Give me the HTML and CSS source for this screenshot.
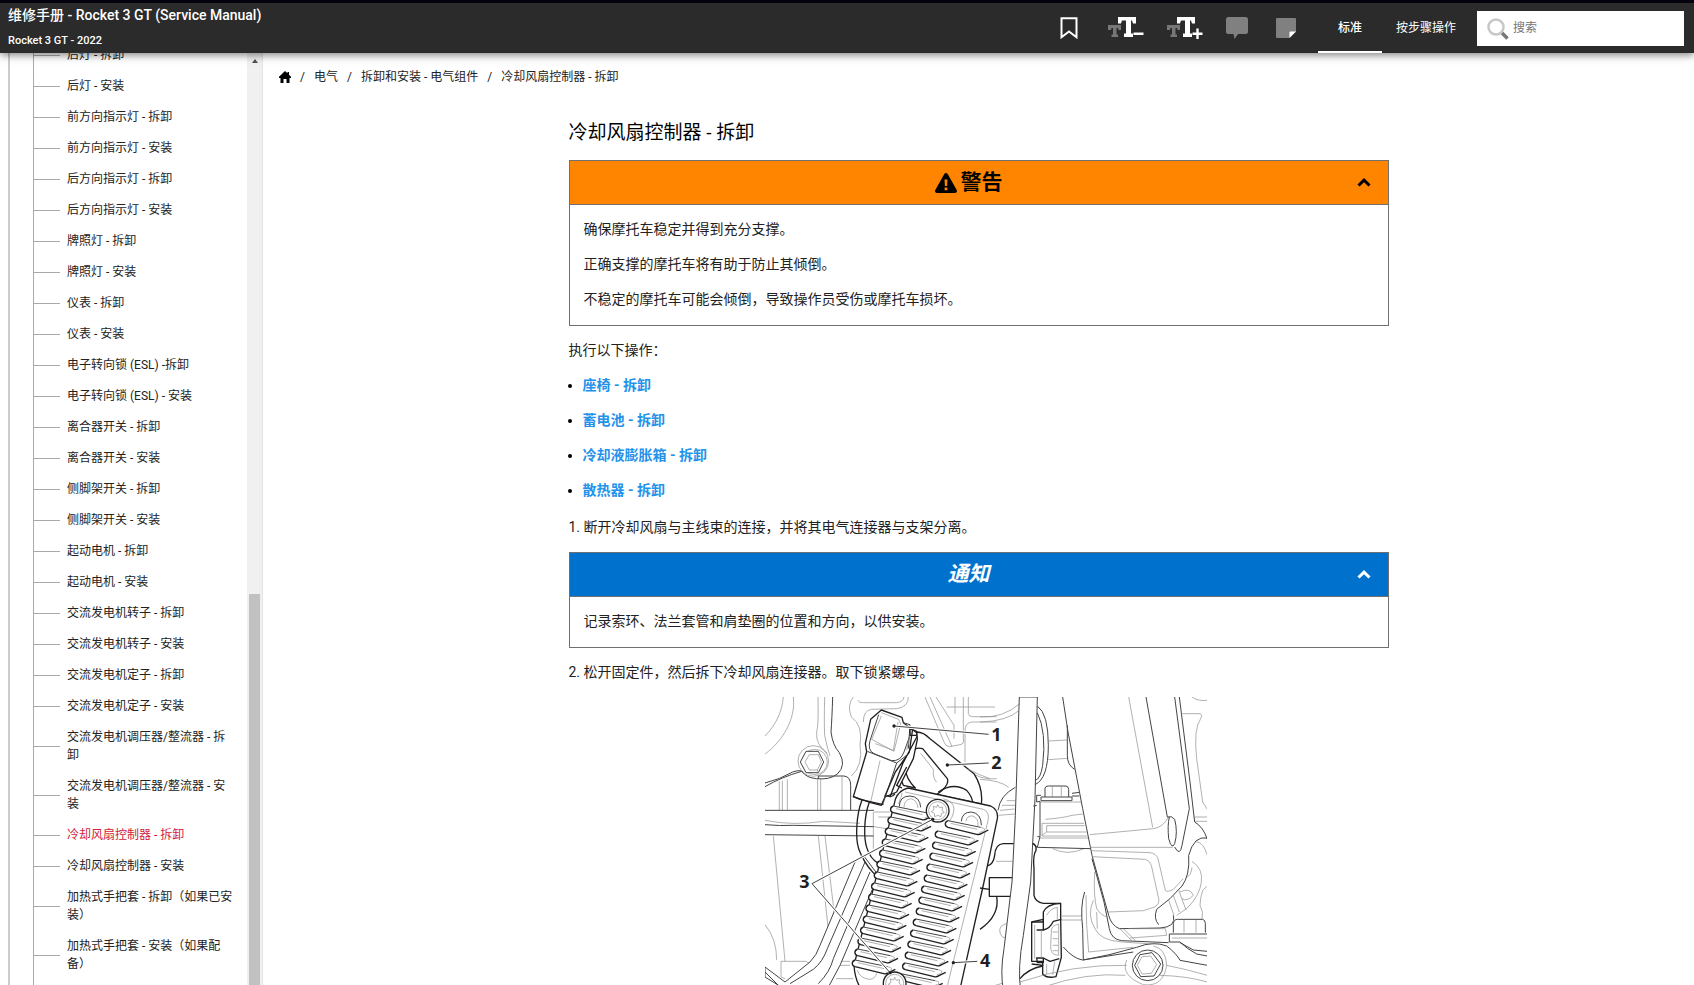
FILE: index.html
```html
<!DOCTYPE html>
<html lang="zh-CN">
  <head>
    <meta charset="utf-8" />
    <meta name="viewport" content="width=device-width, initial-scale=1" />
    <title>维修手册 - Rocket 3 GT (Service Manual)</title>
    <link rel="stylesheet" href="styles.css">
  </head>

  <body>
    <header class="header">
      <div class="header__titles">
        <h1 class="header__title">维修手册 - Rocket 3 GT (Service Manual)</h1>
        <p class="header__subtitle">Rocket 3 GT - 2022</p>
      </div>
      <div class="toolbar">
        <button class="toolbar__button toolbar__button_bookmark" type="button" aria-label="书签">
          <svg width="18" height="22" viewBox="0 0 18 22"><path d="M1.500 1.200h15v19L9 14.500l-7.500 5.700z" fill="none" stroke="#fff" stroke-width="2"/></svg>
        </button>
        <button class="toolbar__button toolbar__button_font" type="button" aria-label="缩小字体">
          <svg width="36" height="22" viewBox="0 0 36 22">
            <path d="M0 8h13v5h-2.500l-.5-2H8.500v6.500H10V20H3.500v-2.500H5V11H3.500L3 13H0z" fill="#777"/>
            <path d="M10 0h18v6.500h-3L24 3.500h-1v13h2V20h-9v-3.500h2v-13h-4l-1 3h-3z" fill="#fff"/>
            <path d="M25.500 15.500h10V18h-10z" fill="#fff"/>
          </svg>
        </button>
        <button class="toolbar__button toolbar__button_font" type="button" aria-label="放大字体">
          <svg width="36" height="22" viewBox="0 0 36 22">
            <path d="M0 8h13v5h-2.500l-.5-2H8.500v6.500H10V20H3.500v-2.500H5V11H3.500L3 13H0z" fill="#777"/>
            <path d="M10 0h18v6.500h-3L24 3.500h-1v13h2V20h-9v-3.500h2v-13h-4l-1 3h-3z" fill="#fff"/>
            <path d="M25.500 15.500h3.800v-4h2.400v4h3.800V18h-3.800v4h-2.400v-4h-3.800z" fill="#fff"/>
          </svg>
        </button>
        <button class="toolbar__button toolbar__button_comment" type="button" aria-label="评论">
          <svg width="22" height="22" viewBox="0 0 22 22"><path d="M2.500 0h17A2.500 2.500 0 0 1 22 2.500v12a2.500 2.500 0 0 1-2.500 2.500H12l-3.500 5L7.500 17h-5A2.500 2.500 0 0 1 0 14.500v-12A2.500 2.500 0 0 1 2.500 0z" fill="#808080"/></svg>
        </button>
        <button class="toolbar__button toolbar__button_note" type="button" aria-label="备注">
          <svg width="20" height="20" viewBox="0 0 20 20"><path d="M1 0h18a1 1 0 0 1 1 1v12.500L13.500 20H1a1 1 0 0 1-1-1V1a1 1 0 0 1 1-1z" fill="#808080"/><path d="M13.500 20v-5.500a1 1 0 0 1 1-1H20z" fill="#fff"/></svg>
        </button>
      </div>
      <nav class="modes">
        <a class="modes__link modes__link_active" href="#">标准</a>
        <a class="modes__link" href="#">按步骤操作</a>
      </nav>
      <label class="search">
        <svg class="search__icon" width="22" height="22" viewBox="0 0 22 22"><path d="M14.500 14.500l6 6" stroke="#777" stroke-width="3.500"/><circle cx="9" cy="9" r="7.500" fill="none" stroke="#c8c8c8" stroke-width="2.600"/></svg>
        <input class="search__input" type="text" placeholder="搜索" aria-label="搜索" />
      </label>
    </header>

    <div class="page">
      <aside class="sidebar">
        <nav class="tree">
          <ul class="tree__list">
            <li class="tree__item"><a href="#">后灯 - 拆卸</a></li>
            <li class="tree__item"><a href="#">后灯 - 安装</a></li>
            <li class="tree__item"><a href="#">前方向指示灯 - 拆卸</a></li>
            <li class="tree__item"><a href="#">前方向指示灯 - 安装</a></li>
            <li class="tree__item"><a href="#">后方向指示灯 - 拆卸</a></li>
            <li class="tree__item"><a href="#">后方向指示灯 - 安装</a></li>
            <li class="tree__item"><a href="#">牌照灯 - 拆卸</a></li>
            <li class="tree__item"><a href="#">牌照灯 - 安装</a></li>
            <li class="tree__item"><a href="#">仪表 - 拆卸</a></li>
            <li class="tree__item"><a href="#">仪表 - 安装</a></li>
            <li class="tree__item"><a href="#">电子转向锁 (ESL) -拆卸</a></li>
            <li class="tree__item"><a href="#">电子转向锁 (ESL) - 安装</a></li>
            <li class="tree__item"><a href="#">离合器开关 - 拆卸</a></li>
            <li class="tree__item"><a href="#">离合器开关 - 安装</a></li>
            <li class="tree__item"><a href="#">侧脚架开关 - 拆卸</a></li>
            <li class="tree__item"><a href="#">侧脚架开关 - 安装</a></li>
            <li class="tree__item"><a href="#">起动电机 - 拆卸</a></li>
            <li class="tree__item"><a href="#">起动电机 - 安装</a></li>
            <li class="tree__item"><a href="#">交流发电机转子 - 拆卸</a></li>
            <li class="tree__item"><a href="#">交流发电机转子 - 安装</a></li>
            <li class="tree__item"><a href="#">交流发电机定子 - 拆卸</a></li>
            <li class="tree__item"><a href="#">交流发电机定子 - 安装</a></li>
            <li class="tree__item"><a href="#">交流发电机调压器/整流器 - 拆卸</a></li>
            <li class="tree__item"><a href="#">交流发电机调压器/整流器 - 安装</a></li>
            <li class="tree__item tree__item_active"><a href="#">冷却风扇控制器 - 拆卸</a></li>
            <li class="tree__item"><a href="#">冷却风扇控制器 - 安装</a></li>
            <li class="tree__item"><a href="#">加热式手把套 - 拆卸（如果已安装）</a></li>
            <li class="tree__item"><a href="#">加热式手把套 - 安装（如果配备）</a></li>
          </ul>
        </nav>
        <div class="scrollbar">
          <span class="scrollbar__arrow"></span>
          <span class="scrollbar__thumb"></span>
        </div>
      </aside>

      <main class="content">
        <nav class="breadcrumbs">
          <a class="breadcrumbs__link" href="#" aria-label="主页">
            <svg class="breadcrumbs__home" width="12" height="12" viewBox="0 0 12 12"><path d="M6 0l2.500 2.300V1H10v2.700l2 2V7h-1.500v5h-3V8h-3v4h-3V7H0V5.700z" fill="#000"/></svg>
          </a>
          <a class="breadcrumbs__link" href="#">电气</a>
          <a class="breadcrumbs__link" href="#">拆卸和安装 - 电气组件</a>
          <a class="breadcrumbs__link" href="#">冷却风扇控制器 - 拆卸</a>
        </nav>

        <article class="article">
          <h2 class="article__title">冷却风扇控制器 - 拆卸</h2>

          <section class="notice">
            <button class="notice__header notice__header_warning" type="button">
              <svg class="notice__icon" width="22" height="20" viewBox="0 0 22 20"><path d="M11 0c.8 0 1.300.4 1.700 1l9 16c.7 1.400 0 3-1.600 3H1.900C.3 20-.4 18.400.3 17l9-16C9.700.4 10.200 0 11 0z" fill="#000"/><path d="M9.500 6.500h3l-.4 6.500h-2.200zM9.600 14.500h2.800v2.800H9.600z" fill="#ff8400"/></svg>
              <span>警告</span>
              <svg class="notice__arrow" width="14" height="9" viewBox="0 0 14 9"><path d="M1.500 7.500L7 2.200l5.500 5.300" fill="none" stroke="currentColor" stroke-width="3"/></svg>
            </button>
            <div class="notice__body">
              <p>确保摩托车稳定并得到充分支撑。</p>
              <p>正确支撑的摩托车将有助于防止其倾倒。</p>
              <p>不稳定的摩托车可能会倾倒，导致操作员受伤或摩托车损坏。</p>
            </div>
          </section>

          <p>执行以下操作：</p>
          <ul class="links">
            <li><a href="#">座椅 - 拆卸</a></li>
            <li><a href="#">蓄电池 - 拆卸</a></li>
            <li><a href="#">冷却液膨胀箱 - 拆卸</a></li>
            <li><a href="#">散热器 - 拆卸</a></li>
          </ul>

          <p>1. 断开冷却风扇与主线束的连接，并将其电气连接器与支架分离。</p>

          <section class="notice">
            <button class="notice__header notice__header_info" type="button">
              <span>通知</span>
              <svg class="notice__arrow" width="14" height="9" viewBox="0 0 14 9"><path d="M1.500 7.500L7 2.200l5.500 5.300" fill="none" stroke="currentColor" stroke-width="3"/></svg>
            </button>
            <div class="notice__body">
              <p>记录索环、法兰套管和肩垫圈的位置和方向，以供安装。</p>
            </div>
          </section>

          <p>2. 松开固定件，然后拆下冷却风扇连接器。取下锁紧螺母。</p>

          <figure class="figure">
            <svg class="figure__drawing" viewBox="0 0 1326 870" role="img" aria-label="冷却风扇控制器">
              <defs>
                <g id="fin">
                  <path class="bold fill" d="M6 0C-5 4-5 17 6 20L92 41Q100 43 107 38L127 28"/>
                  <path class="line" d="M6 0L104 20"/>
                  <path class="thin" d="M104 20Q124 25 112 31L100 36M14 8L94 26"/>
                </g>
                <g id="fins">
                  <use href="#fin" x="0" y="0"/>
                  <use href="#fin" x="-8" y="33"/>
                  <use href="#fin" x="-16" y="66"/>
                  <use href="#fin" x="-25" y="99"/>
                  <use href="#fin" x="-33" y="132"/>
                </g>
              </defs>

              <!-- engine cases, left half -->
              <g transform="translate(-45 -45)">
                <path class="thin" d="M100 45C96 90 78 128 45 162M130 45C138 110 98 178 45 216"/>
                <path class="thin" d="M204 45Q206 130 200 150Q196 188 232 214M224 45Q222 120 224 160Q232 200 240 222"/>
                <path class="line" d="M248 45Q246 110 243 150Q248 190 268 212Q290 250 262 276Q240 294 200 290Q170 288 155 268Q95 285 45 314"/>
                <path class="line" d="M45 303Q90 292 128 270Q150 262 160 270"/>
                <path class="thin" d="M310 45Q290 70 304 105Q340 130 330 190Q340 250 304 282"/>
                <circle class="thin" cx="190" cy="237" r="46"/>
                <circle class="thin" cx="194" cy="240" r="38"/>
                <path class="line fill" d="M151 240L168 208L205 208L221 240L205 272L168 272z"/>
                <path class="thin" d="M165 240L178 218L205 218L214 240L202 264L178 264zM205 208L210 218M205 272L202 264"/>
                <path class="line" d="M205 290V282H282Q302 284 302 310V384"/>
                <path class="thin" d="M88 298V384M97 296V384M112 292V384M203 290V384M212 290V384M276 283V384"/>
                <path class="line" d="M45 385H372M45 428Q90 432 130 430L372 434M45 458L372 462"/>
                <path class="thin" d="M45 415Q130 432 220 418Q300 422 330 424M70 462L105 838M205 462L245 838M225 462L262 770"/>
                <path class="thin" d="M93 838H170M93 838V885L105 890M45 728Q80 770 80 834M170 840L200 852M258 890H310M230 838H300M262 850H300"/>
                <path class="line fill" d="M315 540L210 790Q200 820 180 840L105 900L45 855V885L110 925H230L270 850L385 580L340 520z"/>
                <path class="line" d="M345 540L232 800Q218 840 190 862L120 905M360 570L250 830Q240 870 205 905M45 870L90 915"/>
                <path class="thin" d="M325 55Q325 62 340 62H440Q460 60 462 45M340 120Q340 85 365 82L440 80Q475 75 475 45"/>
                <path class="thin" d="M525 45L582 180Q585 192 598 194L630 188Q644 186 640 170L640 45M540 45L606 194M558 45L612 130L612 170M615 45V95M655 45V95Q657 104 668 104H740M740 120H665Q645 124 645 145V240"/>
                <path class="thin" d="M590 75L735 75M650 262Q690 296 740 290M370 390V500M372 390H420M385 405H420M372 434L410 440"/>
              </g>

              <!-- connector, bracket and cable -->
              <g transform="translate(-45 -45)">
                <path class="bold fill" d="M500 150Q520 150 540 170L672 275Q700 320 694 366L560 338Q600 310 592 290L518 200Q500 195 490 205L468 250Q462 285 496 318L460 310L440 260z"/>
                <path class="thin" d="M512 214L550 262Q548 290 560 300M655 262Q690 280 720 290"/>
                <path class="bold" d="M565 330Q610 300 650 325Q668 345 668 365"/>
                <path class="bold" d="M336 354C318 400 316 470 326 500Q340 540 372 575M358 360C340 410 342 470 350 496Q360 530 386 545"/>
                <path class="bold fill" d="M394 84L456 106L460 122L500 152L502 172L490 230L440 330L405 345L394 370L362 362L310 344L350 210L346 185L362 112z"/>
                <path class="line" d="M386 98L360 176Q352 205 372 215L425 236Q452 238 462 210L480 160M352 208L440 243L398 368M440 243L470 220M460 122L480 128L475 200"/>
                <path class="bold" d="M502 162L458 245L420 345M488 140L478 210L436 270L404 344"/>
                <path class="thin" d="M394 102L365 172L432 208L452 126L446 112L394 92M390 236L362 360M376 185L430 205L444 120M482 150L470 205"/>
                <path class="bold" d="M480 140V160H500V148zM410 340Q425 350 435 335M470 255L440 310L456 318M310 344L330 352L400 368"/>
              </g>

              <!-- controller housing -->
              <g transform="translate(-45 -45)">
                <path class="bold fill" d="M474 318L722 372Q746 384 742 410L702 600L628 930H340Q315 900 312 850L385 560L436 352Q446 325 474 318z"/>
                <path class="thin" d="M465 330L700 382Q720 390 714 416L590 920M454 345L456 332M446 366L452 346"/>
                <path class="line" d="M448 374Q448 342 480 342Q510 344 512 376M634 418Q636 390 664 390Q694 394 694 430"/>
                <path class="thin" d="M462 376Q462 354 482 350Q502 354 504 378M648 418Q650 400 668 402Q686 408 684 432M580 350Q612 358 612 382Q608 414 592 420"/>
                <use href="#fins" x="424" y="372"/>
                <use href="#fins" x="383" y="537"/>
                <use href="#fins" x="342" y="702"/>
                <use href="#fin" x="588" y="416"/>
                <use href="#fins" x="558" y="447"/>
                <use href="#fins" x="517" y="612"/>
                <use href="#fins" x="476" y="777"/>
                <circle class="bold fill" cx="563" cy="386" r="34"/>
                <circle class="thin" cx="563" cy="386" r="27"/>
                <path class="thin" d="M563 368l5 9 10-2-2 10 7 6-9 4-1 9-10-4-9 4-1-10-9-5 8-6-2-10 10 3z"/>
                <path class="thin" d="M322 865Q330 890 360 892Q376 890 380 874"/>
                <circle class="bold fill" cx="434" cy="904" r="34"/>
                <circle class="thin" cx="434" cy="904" r="27"/>
                <path class="thin" d="M434 886l5 9 10-2-2 10 7 6-9 4-1 9-10-4-9 4-1-10-9-5 8-6-2-10 10 3z"/>
              </g>

              <!-- frame and engine, right half -->
              <g transform="translate(645 -45)">
                <path class="thin" d="M0 105Q70 108 118 66M0 120Q80 118 118 85M0 292Q60 295 86 316"/>
                <path class="line" d="M172 72Q205 95 205 190Q205 290 165 308M172 92Q200 150 188 250Q182 290 165 296M106 316Q60 340 54 385"/>
                <path class="thin" d="M205 177L262 174M205 233L262 229M80 356H106M66 370H106M60 385L104 381M56 400L104 396M48 538H98"/>
                <path class="bold" d="M22 552Q40 548 44 520Q46 486 70 485H104M0 618L28 622M28 587H98V643H28zM50 643Q60 700 0 742"/>
                <path class="thin" d="M80 725Q55 730 60 752Q66 770 78 766"/>
                <path class="line fill" d="M118 45L106 400L96 600L72 800Q60 870 70 925H122Q112 860 130 760L152 600L165 350L172 45z"/>
                <path class="line" d="M262 130V220Q262 250 284 262"/>
                <path class="line" d="M195 345V318Q196 312 205 312H258Q266 314 266 322V345M183 345H276V356H183zM170 340H183M276 334L298 331M276 342L298 342M170 340V360L180 358V464L172 496M160 372L170 370M180 464L172 464"/>
                <path class="thin" d="M217 313V345M244 313V345M180 360H304M196 412Q250 408 276 400L308 396M186 424H312M186 424V462H322M200 431H314M200 431V450L186 460M200 450H320M180 468H326M218 500Q262 522 312 500"/>
                <path class="line" d="M158 486L172 496L332 500"/>
                <path class="bold" d="M158 484Q170 488 168 505Q158 520 162 560V640Q166 660 190 664H242"/>
                <path class="line" d="M248 45L264 150L308 380L336 520L386 700Q394 730 418 740L540 738Q590 735 580 700M336 530L372 660L388 740Q394 772 425 776L566 782"/>
                <path class="thin" d="M446 45L518 436M330 458L520 440Q550 436 565 405M330 496H578M334 506L510 512Q528 514 534 530L556 625Q560 632 580 622L610 590M336 524L496 532Q510 536 514 550L536 650Q540 665 524 675L490 686L384 690"/>
                <path class="line" d="M498 45L562 405Q575 400 584 412Q594 450 584 485Q576 505 566 470Q562 430 568 405M584 495Q600 525 606 490L628 380L584 45M598 45L630 300L644 420Q670 435 682 472"/>
                <path class="line" d="M682 468Q642 460 626 520Q630 580 606 612L570 650L530 682Q520 710 536 728"/>
                <path class="thin" d="M636 45Q655 60 690 54M602 95H660Q668 98 662 110Q640 140 650 230L668 360L682 382M640 405H682M644 418H682M682 520Q670 480 650 480M636 538Q670 560 664 600Q660 640 620 680L590 700M566 655L582 700M580 640L598 690M596 624L618 684M636 556Q634 580 620 586M600 630Q630 615 640 640Q620 660 606 650M668 625Q660 650 660 670Q672 690 666 712M668 625L682 612"/>
                <path class="line" d="M580 752V725Q582 712 592 712H668Q676 714 676 724V752M568 756H682M568 756V780H600Q620 800 650 816L682 822M600 782L640 804L682 808"/>
                <path class="thin" d="M612 713V752M648 713V752M576 768H682M420 740L455 776M430 740L466 776M445 740H556L560 760L450 768M245 702H304M245 714H304"/>
                <path class="line" d="M314 630Q300 670 308 740L310 834M250 795Q280 830 308 834L460 810M310 834Q390 820 470 796Q520 776 560 792Q590 815 600 835L682 850"/>
                <path class="thin" d="M318 640Q318 730 326 810L460 796M344 570Q340 640 350 680Q362 700 384 706M340 655Q320 700 345 740Q360 775 425 780L520 786M350 690L352 740"/>
                <path class="bold fill" d="M190 690Q200 666 242 664V712L244 826L228 884Q200 890 188 876V838H155V720H190z"/>
                <path class="bold" d="M155 720L190 712V744H170M190 744Q210 740 220 718L244 712M170 828H190V842H172zM190 828L210 838L238 830M155 846L190 850M120 890Q145 860 188 852"/>
                <path class="thin" d="M164 728V830M184 744V828M200 700Q210 680 232 676V712M214 750Q212 730 236 726V820Q210 820 212 790zM218 750H234M218 770H234M218 790H234M218 806H234M200 846V876M224 838L218 878"/>
                <path class="thin" d="M440 834Q420 880 490 908Q550 916 560 850Q558 800 520 792M120 900Q280 846 440 850M190 915Q320 870 436 880M560 850Q620 862 682 880M540 880Q620 882 682 900"/>
                <circle class="line" cx="503" cy="850" r="46"/>
                <path class="line fill" d="M464 850L480 818L516 812L542 846L522 882L482 884z"/>
                <path class="thin" d="M472 850L486 824L512 822L530 848L514 874L486 876zM40 912L66 904"/>
              </g>

              <!-- callouts -->
              <g transform="translate(-45 -45)">
                <path class="halo" d="M432 132L716 157M592 249L716 243M186 605L548 412M186 605L420 872M610 842L682 838"/>
                <path class="line" d="M432 132L716 157M592 249L716 243M186 605L548 412M186 605L420 872M610 842L682 838"/>
                <circle cx="432" cy="132" r="5"/>
                <circle cx="592" cy="249" r="5"/>
                <circle cx="548" cy="412" r="5"/>
                <circle cx="420" cy="872" r="5"/>
                <circle cx="610" cy="842" r="5"/>
                <text class="callout" x="724" y="176">1</text>
                <text class="callout" x="724" y="262">2</text>
                <text class="callout" x="148" y="619">3</text>
                <text class="callout" x="690" y="855">4</text>
              </g>
            </svg>
          </figure>
        </article>
      </main>
    </div>
  </body>
</html>
```
FILE: styles.css
```css
* {
  box-sizing: border-box;
}

body {
  display: flex;
  flex-direction: column;
  margin: 0;
  height: 100vh;
  overflow: hidden;
  font-family: Roboto, "Noto Sans CJK SC", sans-serif;
  font-size: 14px;
  line-height: 21px;
  color: #222;
  background: #fff;
}

a {
  color: inherit;
  text-decoration: none;
}

button,
input {
  font: inherit;
}

/* header */

.header {
  position: relative;
  z-index: 1;
  display: flex;
  align-items: stretch;
  flex: none;
  height: 53px;
  padding-right: 10px;
  border-top: 3px solid #02030c;
  color: #fff;
  background: #2b2b2b;
  box-shadow: 0 2px 8px rgba(0, 0, 0, 0.5);
}

.header__titles {
  flex: 1;
  padding: 2px 8px;
}

.header__title {
  margin: 0;
  font-size: 14px;
  line-height: 20px;
  font-weight: 500;
}

.header__subtitle {
  margin: 8px 0 0;
  font-size: 11px;
  line-height: 16px;
  font-weight: 500;
}

.toolbar {
  display: flex;
  margin-right: 5px;
}

.toolbar__button {
  display: flex;
  align-items: center;
  justify-content: center;
  padding: 0;
  border: 0;
  background: none;
  cursor: pointer;
}

.toolbar__button_bookmark {
  width: 56px;
}

.toolbar__button_font {
  width: 59px;
}

.toolbar__button_comment {
  width: 44px;
}

.toolbar__button_note {
  width: 54px;
}

.modes {
  display: flex;
  margin-right: 7px;
}

.modes__link {
  display: flex;
  align-items: center;
  padding: 2px 14px 0;
  border-bottom: 2px solid transparent;
  font-size: 12px;
}

.modes__link_active {
  padding: 2px 20px 0;
  border-color: #fff;
  font-weight: 500;
}

.search {
  display: flex;
  align-items: center;
  width: 207px;
  height: 35px;
  margin-top: 8px;
  padding: 0 10px;
  background: #fff;
}

.search__icon {
  flex: none;
}

.search__input {
  flex: 1;
  min-width: 0;
  margin-left: 4px;
  padding: 0;
  border: 0;
  outline: 0;
  font-size: 12px;
  background: none;
}

.search__input::placeholder {
  color: #757575;
}

.page {
  display: flex;
  flex: 1;
  min-height: 0;
}

/* sidebar */

.sidebar {
  display: flex;
  flex: none;
  width: 263px;
  overflow: hidden;
  border-right: 1px solid #e4e4e4;
}

.tree {
  flex: 1;
  margin-left: 8px;
  padding-left: 23px;
  border-left: 2px solid #ccc;
}

/* the list is scrolled part of a row up, under the header */
.tree__list {
  margin: -13px 0 0;
  padding: 0 12px 40px 0;
  border-left: 1px solid #aaa;
  list-style: none;
}

.tree__item {
  display: flex;
  align-items: center;
  padding: 6px 0 7px;
  font-size: 12px;
  line-height: 18px;
}

.tree__item::before {
  content: "";
  flex: none;
  width: 26px;
  height: 1px;
  margin-right: 7px;
  background: #aaa;
}

.tree__item_active {
  color: #d0213a;
}

.scrollbar {
  display: flex;
  flex-direction: column;
  align-items: center;
  width: 15px;
  background: #f0f0f0;
}

.scrollbar__arrow {
  margin-top: 6px;
  border: 3px solid transparent;
  border-top: 0;
  border-bottom: 4px solid #505050;
}

.scrollbar__thumb {
  width: 11px;
  height: 42%;
  margin-top: auto;
  background: #c1c1c1;
}

/* content */

.content {
  flex: 1;
  min-width: 0;
  overflow: hidden;
}

.breadcrumbs {
  display: flex;
  align-items: center;
  padding: 15px 16px 0;
  font-size: 12px;
  line-height: 18px;
}

.breadcrumbs__link {
  display: flex;
  align-items: center;
}

.breadcrumbs__link + .breadcrumbs__link::before {
  content: "/";
  padding: 0 9px;
}

.article {
  max-width: 820px;
  margin: 0 auto;
}

.article p {
  margin: 0 0 14px;
}

.article__title {
  margin: 33px 0 13px;
  font-size: 19px;
  line-height: 28px;
  font-weight: 400;
  color: #000;
}

.notice {
  margin-bottom: 14px;
  border: 1px solid #707070;
}

.notice__header {
  display: flex;
  align-items: center;
  justify-content: center;
  position: relative;
  width: 100%;
  height: 44px;
  padding: 0 20px 0 0;
  border: 0;
  border-bottom: 1px solid #707070;
  font-size: 21px;
  font-weight: 700;
  cursor: pointer;
}

.notice__header_warning {
  color: #000;
  background: #ff8400;
}

.notice__header_info {
  color: #fff;
  background: #0072ce;
  font-style: italic;
}

.notice__icon {
  margin-right: 4px;
}

.notice__arrow {
  position: absolute;
  right: 17px;
}

.notice__body {
  padding: 14px 14px 1px;
}

.links {
  margin: 0 0 16px;
  padding-left: 14px;
  color: #000;
}

.links li + li {
  margin-top: 14px;
}

.links a {
  font-weight: 700;
  color: #2492ea;
}

.figure {
  margin: 0;
  padding-left: 14px;
  text-align: center;
}

.figure__drawing {
  width: 442px;
  max-width: 100%;
  fill: #231f20;
}

.bold,
.line,
.thin,
.halo {
  fill: none;
  stroke: #231f20;
  stroke-width: 4;
  stroke-linejoin: round;
}

.line {
  stroke: #444;
  stroke-width: 3;
}

.thin {
  stroke: #8a8a8a;
  stroke-width: 2;
}

.halo {
  stroke: #fff;
  stroke-width: 9;
}

.fill {
  fill: #fff;
}

.callout {
  font-family: "Noto Sans", sans-serif;
  font-size: 54px;
  font-weight: 700;
}
```
